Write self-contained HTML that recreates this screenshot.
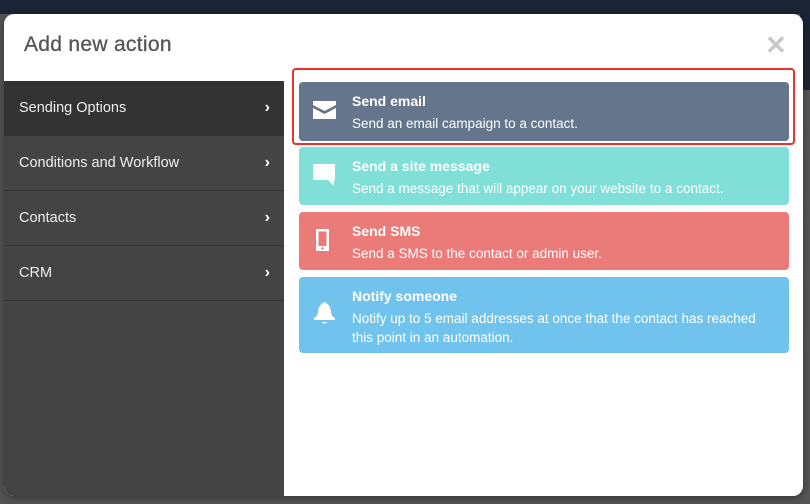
<!DOCTYPE html>
<html><head><style>
body{margin:0;width:810px;height:504px;overflow:hidden;background:#555;font-family:"Liberation Sans",sans-serif;position:relative}
.top{position:absolute;left:0;top:0;width:810px;height:14px;background:#1c2535}
.right{position:absolute;left:800px;top:0;width:10px;height:90px;background:#1c2535}
.modal{position:absolute;left:4px;top:14px;width:799px;height:482px;background:#fff;border-radius:10px;overflow:hidden;box-shadow:0 2px 8px rgba(0,0,0,.4)}
h1{position:absolute;left:20px;top:19px;margin:0;font-size:21px;font-weight:normal;color:#555;letter-spacing:.3px;-webkit-text-stroke:.3px #555}
.x{position:absolute;left:761px;top:16px;font-size:26px;color:#c8c8c8;font-weight:bold}
.side{position:absolute;left:0;top:67px;width:280px;height:415px;background:#444}
.it{height:54px;border-bottom:1px solid #353535;color:#eee;font-size:14.5px;line-height:54px;padding-left:15px;position:relative}
.it.a{background:#333}
.it::after{content:"›";position:absolute;right:14px;top:0;font-weight:bold;font-size:16px;color:#fff}
.card{position:absolute;left:295px;width:490px;border-radius:4px;color:#fff}
.card b{position:absolute;left:53px;top:11px;font-size:14px}
.card span{position:absolute;left:53px;top:32px;font-size:13.5px;line-height:19px;width:418px}
.card svg{position:absolute;left:14px}
.red{position:absolute;left:288px;top:54px;width:499px;height:73px;border:2px solid #f0302a;border-radius:4px}
</style></head><body>
<div class="top"></div><div class="right"></div>
<div class="modal">
<h1>Add new action</h1><div class="x">✕</div>
<div class="side">
<div class="it a">Sending Options</div>
<div class="it">Conditions and Workflow</div>
<div class="it">Contacts</div>
<div class="it">CRM</div>
</div>
<div class="red"></div>
<div class="card" style="top:68px;height:59px;background:#65758b">
<svg style="top:19px" width="24" height="18" viewBox="0 0 24 18"><path d="M0 0H23V4L11.5 10L0 4Z M0 7L11.5 13L23 7V18H0Z" fill="#fff"/></svg>
<b>Send email</b><span>Send an email campaign to a contact.</span></div>
<div class="card" style="top:133px;height:58px;background:#80e0d8">
<svg style="top:17px" width="24" height="24" viewBox="0 0 24 24"><path d="M0 0H22V16H21V22L15 16H0Z" fill="#fff"/></svg>
<b>Send a site message</b><span>Send a message that will appear on your website to a contact.</span></div>
<div class="card" style="top:198px;height:58px;background:#ea7b79">
<svg style="left:16px;top:17px" width="16" height="24" viewBox="0 0 16 24"><path d="M1 0H14V22H1Z M3.5 2.5V17H11.5V2.5Z" fill="#fff" fill-rule="evenodd"/><circle cx="7.5" cy="19.5" r="1.2" fill="#ea7b79"/></svg>
<b>Send SMS</b><span>Send a SMS to the contact or admin user.</span></div>
<div class="card" style="top:263px;height:76px;background:#6fc3ec">
<svg style="top:25px" width="24" height="24" viewBox="0 0 24 24"><path d="M11.5 0C7 2 5 6 5 10C5 13 3 15 1 16V18H22V16C20 15 18 13 18 10C18 6 16 2 11.5 0Z M9 20H14C14 22 9 22 9 20Z" fill="#fff"/></svg>
<b>Notify someone</b><span>Notify up to 5 email addresses at once that the contact has reached this point in an automation.</span></div>
</div>
</body></html>
